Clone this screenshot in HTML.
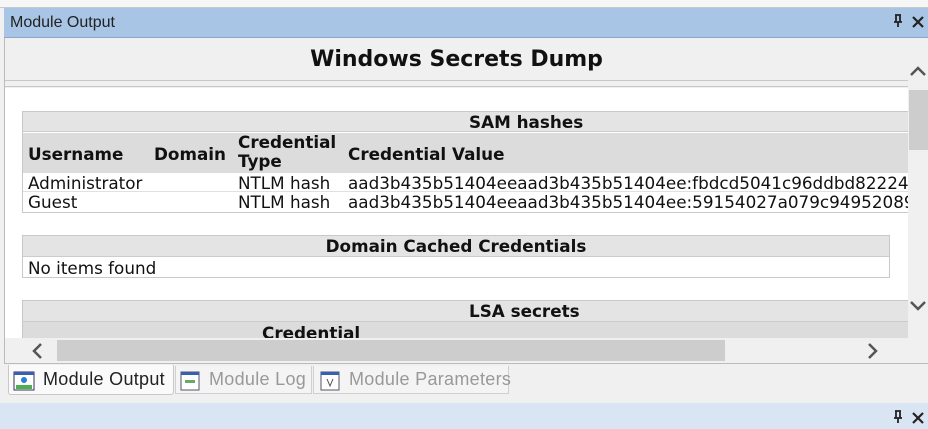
<!DOCTYPE html>
<html><head><style>
*{margin:0;padding:0;box-sizing:border-box}
body{width:928px;height:429px;overflow:hidden;background:#f0f0f0;position:relative;font-family:"DejaVu Sans","Liberation Sans",sans-serif}
.a{position:absolute}
.t{font-family:"DejaVu Sans",sans-serif;font-size:16.8px;color:#111;white-space:nowrap}
.b{font-weight:bold}
.tab{font:18px 'Liberation Sans',sans-serif;letter-spacing:0.3px}
</style></head><body>
<div class="a" style="left:0;top:0;width:928px;height:8px;background:#f6f6f6;border-bottom:1px solid #c8c8c8"></div>
<div class="a" style="left:4px;top:8px;width:924px;height:30px;background:#a8c5e6;border-bottom:1px solid #8aa6c8"></div>
<div class="a" style="left:10px;top:14px;font:16px 'Liberation Sans',sans-serif;color:#222">Module Output</div>
<svg class="a" style="left:892px;top:14px" width="12" height="14"><path d="M3 1 H9 M4 1 V8 H8 V1 M2 8 H10 M6 8 V13" stroke="#222" stroke-width="1.8" fill="none"/></svg>
<svg class="a" style="left:911px;top:15px" width="14" height="14"><path d="M2 2 L12 12 M12 2 L2 12" stroke="#222" stroke-width="2.2"/></svg>
<!-- frame -->
<div class="a" style="left:4px;top:38px;width:924px;height:326px;background:#f0f0f0;border-left:1px solid #bbb;border-bottom:1px solid #bbb"></div>
<div class="a" style="left:5px;top:80px;width:903px;height:1px;background:#c8c8c8"></div>
<div class="a" style="left:5px;top:86px;width:903px;height:1px;background:#c8c8c8"></div>
<div class="a b" style="left:5px;top:47px;width:903px;text-align:center;font-size:22px;color:#111">Windows Secrets Dump</div>
<div class="a" style="left:5px;top:88px;width:903px;height:250px;background:#fff"></div>
<!-- vscroll -->
<div class="a" style="left:908px;top:38px;width:20px;height:300px;background:#f0f0f0"></div>
<div class="a" style="left:909px;top:90px;width:19px;height:60px;background:#cdcdcd"></div>
<svg class="a" style="left:908px;top:64px" width="20" height="14"><path d="M3 11 L10 4 L17 11" stroke="#555" stroke-width="2.5" fill="none"/></svg>
<svg class="a" style="left:908px;top:299px" width="20" height="14"><path d="M3 3 L10 10 L17 3" stroke="#555" stroke-width="2.5" fill="none"/></svg>
<!-- SAM -->
<div class="a" style="left:22px;top:111px;width:886px;height:102px;border:1px solid #c8c8c8;border-right:none;background:#fff"></div>
<div class="a" style="left:23px;top:112px;width:885px;height:20px;background:#e4e4e4;border-bottom:1px solid #ccc"></div>
<div class="a t b" style="left:469px;top:112px">SAM hashes</div>
<div class="a" style="left:23px;top:133px;width:885px;height:40px;background:#dcdcdc"></div>
<div class="a t b" style="left:28px;top:144px">Username</div>
<div class="a t b" style="left:154px;top:144px">Domain</div>
<div class="a t b" style="left:238px;top:133px;line-height:19px">Credential<br>Type</div>
<div class="a t b" style="left:348px;top:144px">Credential Value</div>
<div class="a" style="left:23px;top:191px;width:885px;height:1px;background:#e0e0e0"></div>
<div class="a t" style="left:28px;top:173px">Administrator</div>
<div class="a t" style="left:238px;top:173px">NTLM hash</div>
<div class="a t" style="left:348px;top:173px;width:560px;overflow:hidden">aad3b435b51404eeaad3b435b51404ee:fbdcd5041c96ddbd82224</div>
<div class="a t" style="left:28px;top:192px">Guest</div>
<div class="a t" style="left:238px;top:192px">NTLM hash</div>
<div class="a t" style="left:348px;top:192px;width:560px;overflow:hidden">aad3b435b51404eeaad3b435b51404ee:59154027a079c94952089</div>
<!-- Domain cached -->
<div class="a" style="left:22px;top:235px;width:868px;height:43px;border:1px solid #c8c8c8;background:#fff"></div>
<div class="a" style="left:23px;top:236px;width:866px;height:21px;background:#e4e4e4;border-bottom:1px solid #ccc"></div>
<div class="a t b" style="left:23px;top:236px;width:866px;text-align:center">Domain Cached Credentials</div>
<div class="a t" style="left:28px;top:258px">No items found</div>
<!-- LSA -->
<div class="a" style="left:22px;top:300px;width:886px;height:38px;border:1px solid #c8c8c8;border-right:none;border-bottom:none;background:#dcdcdc"></div>
<div class="a" style="left:23px;top:301px;width:885px;height:21px;background:#e4e4e4;border-bottom:1px solid #ccc"></div>
<div class="a t b" style="left:469px;top:301px">LSA secrets</div>
<div class="a" style="left:23px;top:323px;width:885px;height:15px;overflow:hidden"><div class="t b" style="position:absolute;left:239px;top:0px">Credential</div></div>
<!-- hscroll -->
<div class="a" style="left:5px;top:338px;width:923px;height:25px;background:#f0f0f0"></div>
<div class="a" style="left:57px;top:340px;width:668px;height:21px;background:#cdcdcd"></div>
<svg class="a" style="left:30px;top:342px" width="14" height="18"><path d="M11 2 L4 9 L11 16" stroke="#555" stroke-width="2.5" fill="none"/></svg>
<svg class="a" style="left:866px;top:342px" width="14" height="18"><path d="M3 2 L10 9 L3 16" stroke="#555" stroke-width="2.5" fill="none"/></svg>
<!-- tabs -->
<div class="a" style="left:8px;top:365px;width:166px;height:30px;background:#fafafa;border:1px solid #c8c8c8;border-top:none;border-radius:0 0 3px 3px"></div>
<svg class="a" style="left:13px;top:371px" width="22" height="20"><rect x="1" y="1" width="20" height="18" fill="#fff" stroke="#335"/><rect x="1" y="1" width="20" height="3" fill="#3a5fb0"/><rect x="3" y="14" width="16" height="4" fill="#4caf50"/><circle cx="11" cy="9" r="3" fill="#2a7fd4"/></svg>
<div class="a tab" style="left:43px;top:369px;color:#222">Module Output</div>
<div class="a" style="left:175px;top:366px;width:137px;height:28px;background:#f4f4f4;border:1px solid #d0d0d0;border-top:none"></div>
<svg class="a" style="left:180px;top:371px" width="20" height="20"><rect x="1" y="1" width="18" height="18" fill="#fff" stroke="#556"/><rect x="1" y="1" width="18" height="3" fill="#3a5fb0"/><rect x="5" y="9" width="10" height="3" fill="#6a6"/></svg>
<div class="a tab" style="left:209px;top:369px;color:#999">Module Log</div>
<div class="a" style="left:313px;top:366px;width:196px;height:28px;background:#f4f4f4;border:1px solid #d0d0d0;border-top:none"></div>
<svg class="a" style="left:320px;top:371px" width="20" height="20"><rect x="1" y="1" width="18" height="18" fill="#fff" stroke="#556"/><rect x="1" y="1" width="18" height="3" fill="#3a5fb0"/><path d="M7 8 L10 15 L13 8" stroke="#555" fill="none"/></svg>
<div class="a tab" style="left:349px;top:369px;color:#999">Module Parameters</div>
<!-- bottom -->
<div class="a" style="left:0;top:403px;width:928px;height:26px;background:#d9e5f3"></div>
<svg class="a" style="left:892px;top:410px" width="12" height="14"><path d="M3 1 H9 M4 1 V8 H8 V1 M2 8 H10 M6 8 V13" stroke="#222" stroke-width="1.8" fill="none"/></svg>
<svg class="a" style="left:911px;top:411px" width="14" height="14"><path d="M2 2 L12 12 M12 2 L2 12" stroke="#222" stroke-width="2.2"/></svg>
</body></html>
